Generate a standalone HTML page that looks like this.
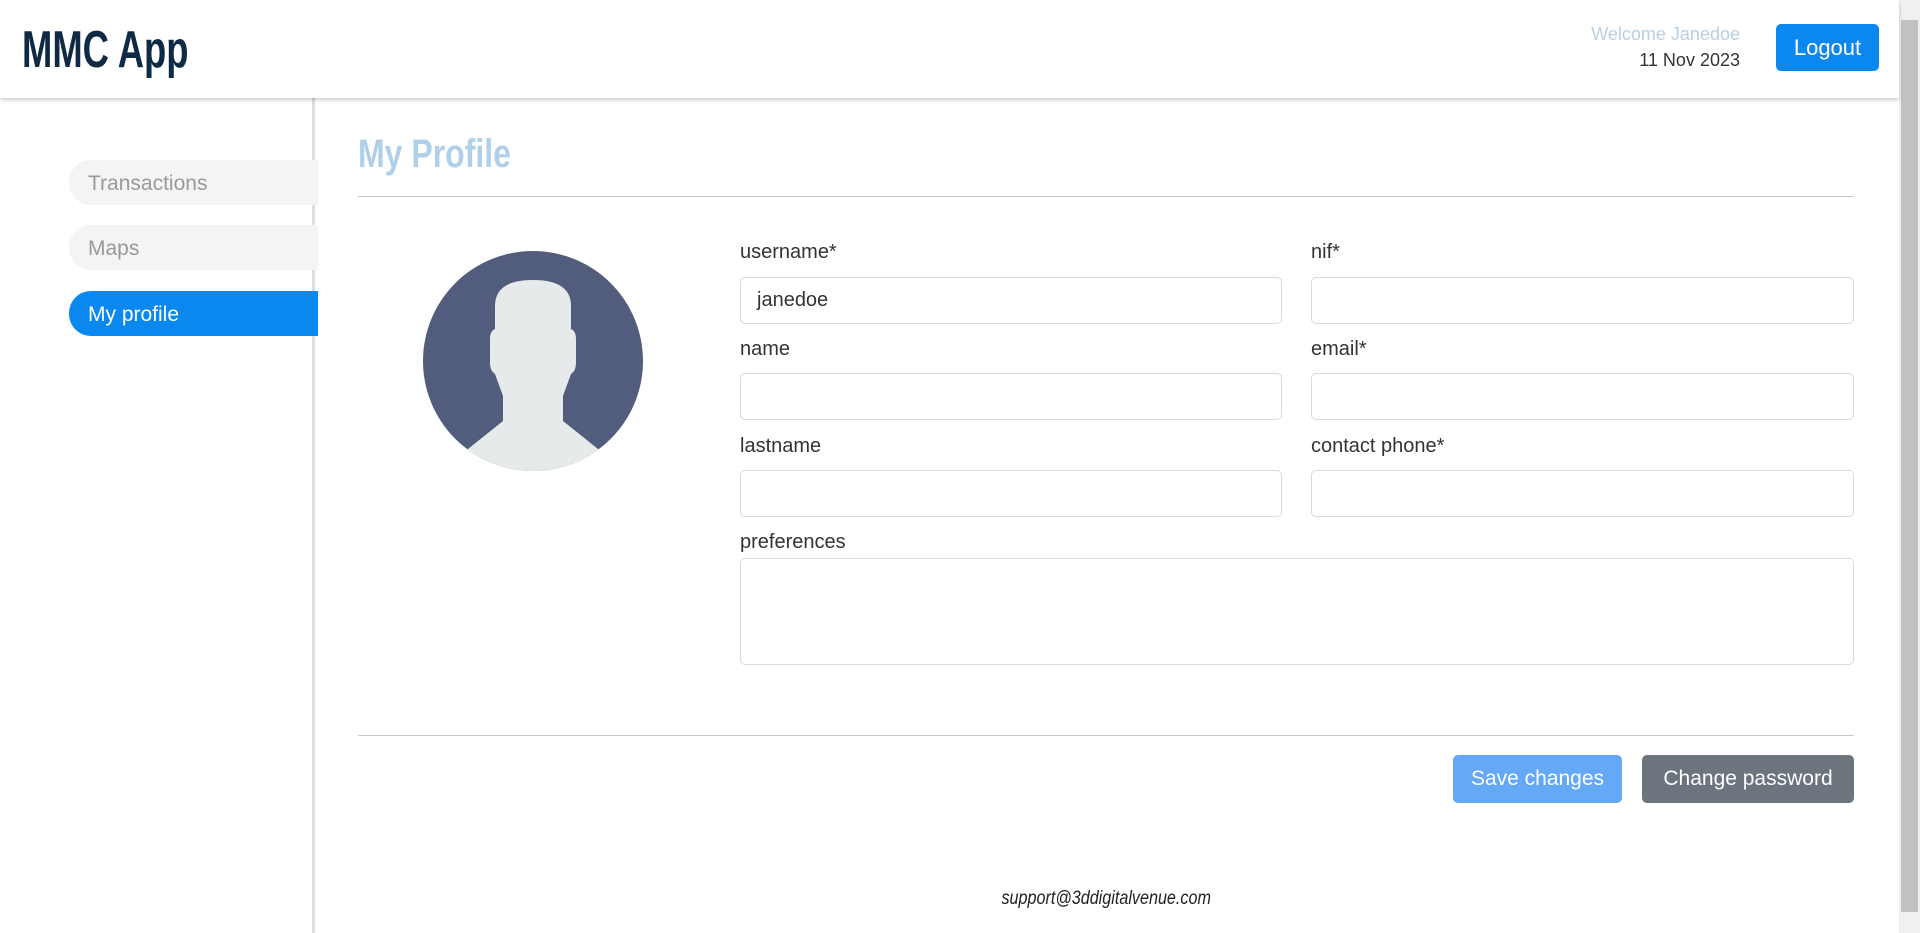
<!DOCTYPE html>
<html><head><meta charset="utf-8"><style>
*{box-sizing:border-box;margin:0;padding:0}
body{width:1920px;height:933px;overflow:hidden;background:#fff;font-family:"Liberation Sans",sans-serif;position:relative}
.hdr{position:absolute;left:0;top:0;width:1899px;height:98px;background:#fff;box-shadow:0 2px 4px rgba(0,0,0,.2);z-index:2}
.logo{position:absolute;left:22px;top:20px;font-size:52px;font-weight:bold;color:#0e2a44;transform:scaleX(.7);transform-origin:left}
.wel{position:absolute;right:159px;top:24px;font-size:18px;color:#b9cfe2;text-align:right}
.date{position:absolute;right:159px;top:50px;font-size:18px;color:#333}
.logout{position:absolute;left:1776px;top:24px;width:103px;height:47px;background:#0b87f0;border-radius:5px;color:#fff;font-size:22px;text-align:center;line-height:47px}
.sb{position:absolute;right:0;top:0;width:21px;height:933px;background:#f0f0f0}
.sb .th{position:absolute;left:2px;top:20px;width:17px;height:892px;background:#c1c1c1}
.side{position:absolute;left:312px;top:98px;width:3px;height:835px;background:#ddd}
.pill{position:absolute;left:69px;width:249px;height:45px;border-radius:22px 0 0 22px;background:#f4f4f4;color:#999;font-size:21px;line-height:47px;padding-left:19px}
.pill.a{background:#0b87f0;color:#fff}
h1{position:absolute;left:358px;top:132px;font-size:40px;color:#b0d0ea;font-weight:bold;transform:scaleX(.8);transform-origin:left}
.hr{position:absolute;left:358px;width:1496px;height:1px;background:#c8c8c8}
.lbl{position:absolute;font-size:20px;color:#333}
.inp{position:absolute;border:1px solid #d9d9d9;border-radius:5px;background:#fff;font-size:20px;color:#333;padding-left:16px;line-height:45px}
.btn{position:absolute;top:755px;height:48px;border-radius:5px;color:#fff;font-size:21px;text-align:center;line-height:48px}
.sup{position:absolute;left:0;width:2212px;text-align:center;top:888px}
.sup span{display:inline-block;font-size:19px;font-style:italic;color:#222;transform:scaleX(.85)}
</style></head><body>
<div class="hdr">
<div class="logo">MMC App</div>
<div class="wel">Welcome Janedoe</div>
<div class="date">11 Nov 2023</div>
<div class="logout">Logout</div>
</div>
<div class="sb"><div class="th"></div></div>
<div class="side"></div>
<div class="pill" style="top:160px">Transactions</div>
<div class="pill" style="top:225px">Maps</div>
<div class="pill a" style="top:291px">My profile</div>
<h1>My Profile</h1>
<div class="hr" style="top:196px"></div>
<svg style="position:absolute;left:423px;top:251px" width="220" height="220" viewBox="0 0 220 220">
<defs><clipPath id="c"><circle cx="110" cy="110" r="110"/></clipPath></defs>
<circle cx="110" cy="110" r="110" fill="#525d7d"/>
<g clip-path="url(#c)" fill="#e6eaeb">
<path d="M72 55 Q72 29 110 29 Q148 29 148 55 L148 78 Q153 80 153 88 L153 112 Q153 120 148 123 L140 145 L140 170 L190 210 L190 230 L30 230 L30 210 L80 170 L80 145 L72 123 Q67 120 67 112 L67 88 Q67 80 72 78 Z"/>
</g></svg>
<div class="lbl" style="left:740px;top:241px">username*</div>
<div class="inp" style="left:740px;top:277px;width:542px;height:47px">janedoe</div>
<div class="lbl" style="left:1311px;top:241px">nif*</div>
<div class="inp" style="left:1311px;top:277px;width:543px;height:47px"></div>
<div class="lbl" style="left:740px;top:338px">name</div>
<div class="inp" style="left:740px;top:373px;width:542px;height:47px"></div>
<div class="lbl" style="left:1311px;top:338px">email*</div>
<div class="inp" style="left:1311px;top:373px;width:543px;height:47px"></div>
<div class="lbl" style="left:740px;top:435px">lastname</div>
<div class="inp" style="left:740px;top:470px;width:542px;height:47px"></div>
<div class="lbl" style="left:1311px;top:435px">contact phone*</div>
<div class="inp" style="left:1311px;top:470px;width:543px;height:47px"></div>
<div class="lbl" style="left:740px;top:531px">preferences</div>
<div class="inp" style="left:740px;top:558px;width:1114px;height:107px"></div>
<div class="hr" style="top:735px"></div>
<div class="btn" style="left:1453px;width:169px;background:#64a8f6">Save changes</div>
<div class="btn" style="left:1642px;width:212px;background:#6c757d">Change password</div>
<div class="sup"><span>support@3ddigitalvenue.com</span></div>
</body></html>
